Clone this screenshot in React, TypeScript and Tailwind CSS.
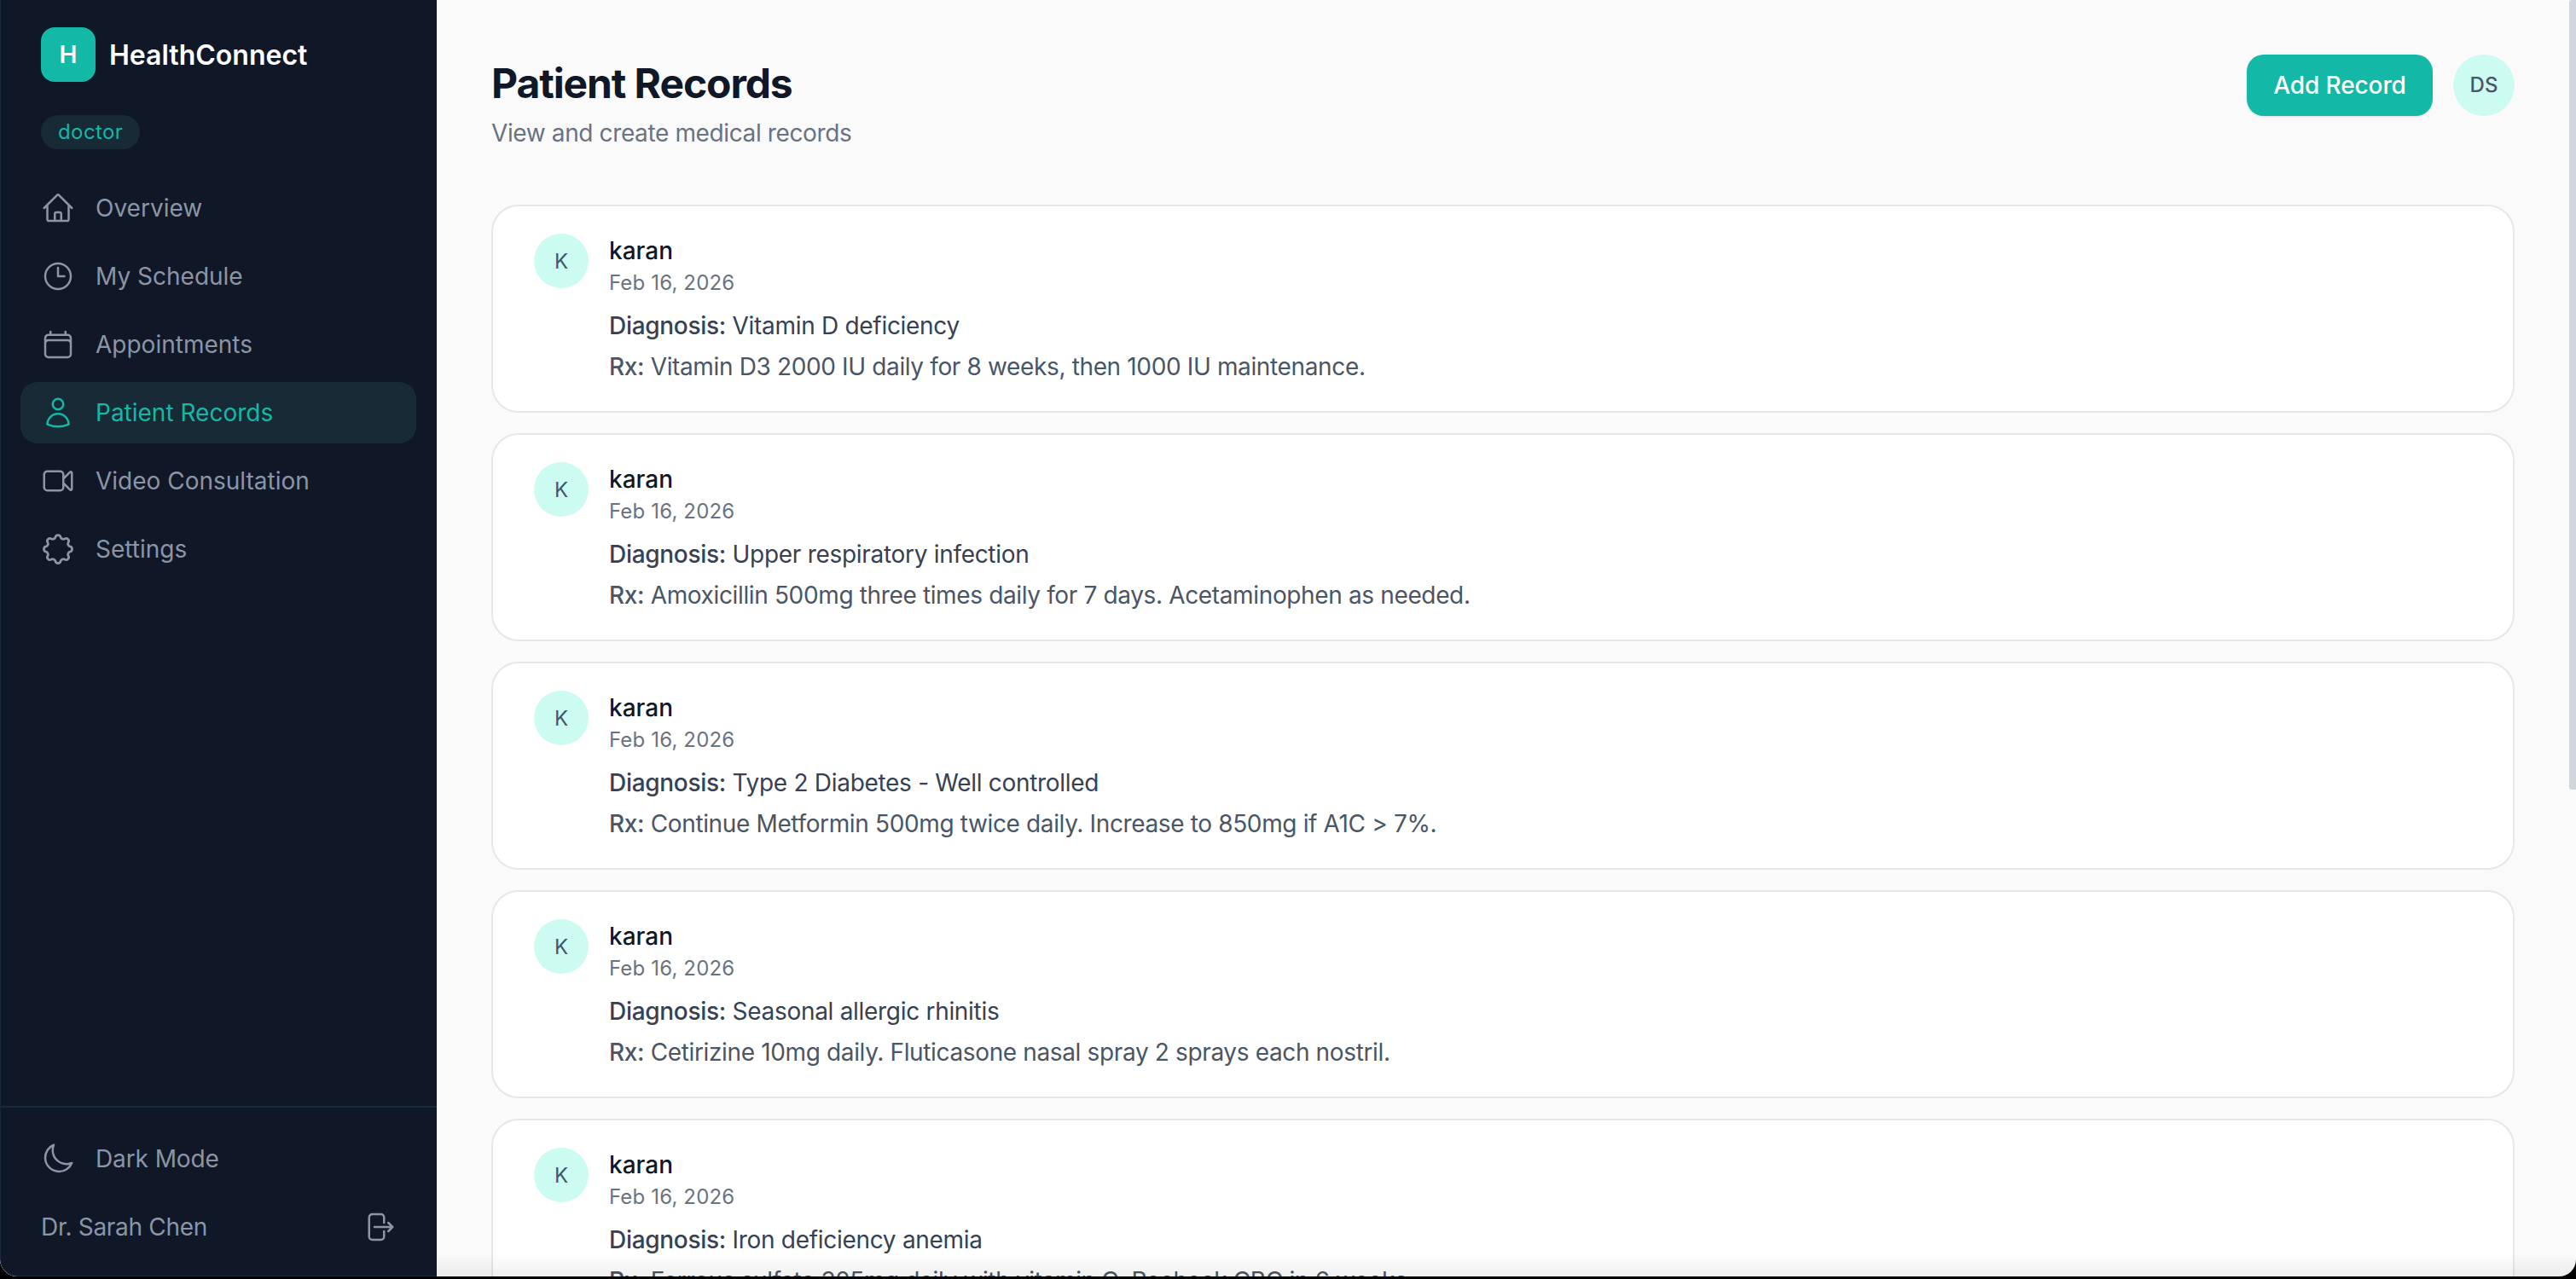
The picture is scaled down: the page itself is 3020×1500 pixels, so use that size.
import React from 'react';

const font = { fontFamily: 'Inter, "Liberation Sans", sans-serif' };

const navItems = [
  {
    label: 'Overview',
    d: 'M2.25 12l8.954-8.955c.44-.439 1.152-.439 1.591 0L21.75 12M4.5 9.75v10.125c0 .621.504 1.125 1.125 1.125H9.75v-4.875c0-.621.504-1.125 1.125-1.125h2.25c.621 0 1.125.504 1.125 1.125V21h4.125c.621 0 1.125-.504 1.125-1.125V9.75M8.25 21h8.25',
    iconClass: 'h-10 w-10',
  },
  { label: 'My Schedule', d: 'M12 6v6h4.5m4.5 0a9 9 0 1 1-18 0 9 9 0 0 1 18 0Z', iconClass: 'h-10 w-10' },
  {
    label: 'Appointments',
    d: 'M6.75 3v2.25M17.25 3v2.25M3 18.75V7.5a2.25 2.25 0 0 1 2.25-2.25h13.5A2.25 2.25 0 0 1 21 7.5v11.25m-18 0A2.25 2.25 0 0 0 5.25 21h13.5A2.25 2.25 0 0 0 21 18.75m-18 0v-7.5A2.25 2.25 0 0 1 5.25 9h13.5A2.25 2.25 0 0 1 21 11.25v7.5',
    iconClass: 'h-10 w-10',
  },
  {
    label: 'Patient Records',
    active: true,
    d: 'M15.75 6a3.75 3.75 0 1 1-7.5 0 3.75 3.75 0 0 1 7.5 0ZM4.501 20.118a7.5 7.5 0 0 1 14.998 0A17.933 17.933 0 0 1 12 21.75c-2.676 0-5.216-.584-7.499-1.632Z',
    iconClass: 'h-10 w-10',
  },
  {
    label: 'Video Consultation',
    d: 'm15.75 10.5 4.72-4.72a.75.75 0 0 1 1.28.53v11.38a.75.75 0 0 1-1.28.53l-4.72-4.72M4.5 18.75h9a2.25 2.25 0 0 0 2.25-2.25v-9a2.25 2.25 0 0 0-2.25-2.25h-9A2.25 2.25 0 0 0 2.25 7.5v9a2.25 2.25 0 0 0 2.25 2.25Z',
    iconClass: 'h-10 w-10',
  },
  {
    label: 'Settings',
    d: 'M10.325 4.317c.426-1.756 2.924-1.756 3.35 0a1.724 1.724 0 002.573 1.066c1.543-.94 3.31.826 2.37 2.37a1.724 1.724 0 001.065 2.572c1.756.426 1.756 2.924 0 3.35a1.724 1.724 0 00-1.066 2.573c.94 1.543-.826 3.31-2.37 2.37a1.724 1.724 0 00-2.572 1.065c-.426 1.756-2.924 1.756-3.35 0a1.724 1.724 0 00-2.573-1.066c-1.543.94-3.31-.826-2.37-2.37a1.724 1.724 0 00-1.065-2.572c-1.756-.426-1.756-2.924 0-3.35a1.724 1.724 0 001.066-2.573c-.94-1.543.826-3.31 2.37-2.37.996.608 2.296.07 2.572-1.065z',
    iconClass: '-mx-0.5 h-11 w-11',
  },
];

const records = [
  { diagnosis: 'Vitamin D deficiency', rx: 'Vitamin D3 2000 IU daily for 8 weeks, then 1000 IU maintenance.' },
  { diagnosis: 'Upper respiratory infection', rx: 'Amoxicillin 500mg three times daily for 7 days. Acetaminophen as needed.' },
  { diagnosis: 'Type 2 Diabetes - Well controlled', rx: 'Continue Metformin 500mg twice daily. Increase to 850mg if A1C > 7%.' },
  { diagnosis: 'Seasonal allergic rhinitis', rx: 'Cetirizine 10mg daily. Fluticasone nasal spray 2 sprays each nostril.' },
  { diagnosis: 'Iron deficiency anemia', rx: 'Ferrous sulfate 325mg daily with vitamin C. Recheck CBC in 6 weeks.' },
];

function Icon({ d, className }: { d: string; className: string }) {
  return (
    <svg viewBox="0 0 24 24" fill="none" stroke="currentColor" strokeWidth={1.5} strokeLinecap="round" strokeLinejoin="round" className={className}>
      <path d={d} />
    </svg>
  );
}

function Sidebar() {
  return (
    <aside className="flex w-[512px] shrink-0 flex-col rounded-bl-[20px] border-b border-l border-[#17293a] bg-[#101828]">
      <div className="flex items-center gap-4 pl-[47px] pt-8">
        <div className="flex h-16 w-16 items-center justify-center rounded-2xl bg-[#14b8a6] text-[28px] font-semibold text-white">H</div>
        <span className="pt-0.5 text-[32px] font-semibold text-white">HealthConnect</span>
      </div>
      <div className="pl-[47px] pt-[39px]">
        <span className="flex h-10 w-fit items-center rounded-full bg-[#172a36] px-5 text-2xl tracking-[0.4px] text-[#14b8a6]">doctor</span>
      </div>
      <nav className="mt-[33px] flex flex-col gap-2 pl-[23px] pr-6">
        {navItems.map(item => (
          <a
            key={item.label}
            className={`flex h-[72px] items-center gap-6 rounded-[20px] px-6 text-[28px] ${
              item.active ? 'bg-[#172a36] text-[#14b8a6]' : 'text-[#8b95a5]'
            }`}
          >
            <Icon d={item.d} className={`${item.iconClass} shrink-0`} />
            {item.label}
          </a>
        ))}
      </nav>
      <div className="mt-auto border-t-2 border-[#17293a] pb-[21px] pl-[23px] pr-6 pt-6">
        <a className="flex h-[72px] items-center gap-6 px-6 text-[28px] text-[#8b95a5]">
          <Icon
            d="M21.752 15.002A9.72 9.72 0 0 1 18 15.75c-5.385 0-9.75-4.365-9.75-9.75 0-1.33.266-2.597.748-3.752A9.753 9.753 0 0 0 3 11.25C3 16.635 7.365 21 12.75 21a9.753 9.753 0 0 0 9.002-5.998Z"
            className="h-10 w-10 shrink-0"
          />
          <span className="tracking-[-0.1px]">Dark Mode</span>
        </a>
        <div className="mt-2 flex h-[72px] items-center justify-between px-6 text-[28px] text-[#8b95a5]">
          <span className="tracking-[-0.3px]">Dr. Sarah Chen</span>
          <Icon
            d="M15.75 9V5.25A2.25 2.25 0 0 0 13.5 3h-6a2.25 2.25 0 0 0-2.25 2.25v13.5A2.25 2.25 0 0 0 7.5 21h6a2.25 2.25 0 0 0 2.25-2.25V15m3 0 3-3m0 0-3-3m3 3H9"
            className="h-10 w-10 shrink-0"
          />
        </div>
      </div>
    </aside>
  );
}

function RecordCard({ diagnosis, rx }: { diagnosis: string; rx: string }) {
  return (
    <div className="flex shrink-0 gap-6 rounded-[32px] border-2 border-[#e5e7eb] bg-white px-12 py-8">
      <div className="flex h-16 w-16 shrink-0 items-center justify-center rounded-full bg-[#ccfbf1] pt-0.5 text-2xl text-[#4a5565]">K</div>
      <div>
        <p className="text-[28px] font-medium leading-10 text-[#101828]">karan</p>
        <p className="text-2xl leading-9 tracking-[0.15px] text-[#6a7282]">Feb 16, 2026</p>
        <p className="mt-3 text-[28px] leading-10 tracking-[-0.3px] text-[#364153]">
          <span className="font-medium">Diagnosis:</span> {diagnosis}
        </p>
        <p className="mt-2 text-[28px] leading-10 tracking-[-0.36px] text-[#4a5565]">
          <span className="font-medium">Rx:</span> {rx}
        </p>
      </div>
    </div>
  );
}

export default function App() {
  return (
    <div className="h-[1500px] overflow-hidden bg-black" style={font}>
      <div className="flex h-[1497px] overflow-hidden rounded-b-[20px] bg-[#fafafa]">
        <Sidebar />
        <main className="relative flex-1 overflow-hidden">
          <div className="pl-16 pr-[72px] pt-16">
            <header className="mb-16 flex items-start justify-between">
              <div>
                <h1 className="text-5xl font-bold leading-[68px] tracking-[-1.1px] text-[#101828]">Patient Records</h1>
                <p className="mt-1 text-[28px] leading-10 tracking-[-0.38px] text-[#6a7282]">View and create medical records</p>
              </div>
              <div className="flex items-center gap-6">
                <button className="h-[72px] w-[218px] rounded-[20px] bg-[#14b8a6] text-[28px] font-medium tracking-[-0.1px] text-white shadow-sm">Add Record</button>
                <div className="flex h-[72px] w-[72px] items-center justify-center rounded-full bg-[#ccfbf1] text-2xl font-medium text-[#4a5565]">DS</div>
              </div>
            </header>
            <div className="flex flex-col gap-6">
              {records.map(record => (
                <RecordCard key={record.diagnosis} {...record} />
              ))}
            </div>
          </div>
          {/* scrollbar thumb and the window's bottom shadow sit over the content */}
          <div className="absolute right-0 top-0 h-[926px] w-2 rounded-l-[3px] bg-[#d1d5dc]" />
          <div className="absolute bottom-0 left-0 right-0 h-7 bg-gradient-to-b from-transparent to-black/[0.06]" />
        </main>
      </div>
    </div>
  );
}
